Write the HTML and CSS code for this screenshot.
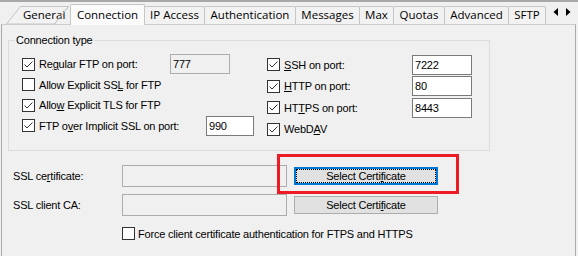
FILE: index.html
```html
<!DOCTYPE html>
<html>
<head>
<meta charset="utf-8">
<link rel="stylesheet" href="styles.css">
</head>
<body>
<div class="window">
  <div class="topline"></div>
  <div class="tabstrip">
    <div class="tab tab-general">
      <svg class="general-shape" width="66" height="18" viewBox="0 0 66 18"><polygon points="1.5,18 15.5,0.5 63.5,0.5 49.5,18" fill="#f2f2f2" stroke="#c6c6c6"/></svg>
      <span class="tab-label">General</span>
      <svg class="general-edge" width="66" height="18" viewBox="0 0 66 18"><line x1="63.5" y1="0.5" x2="49.5" y2="18" stroke="#c6c6c6"/></svg>
    </div>
    <div class="tab selected tab-connection">Connection</div>
    <div class="tab tab-ip">IP Access</div>
    <div class="tab tab-auth">Authentication</div>
    <div class="tab tab-messages">Messages</div>
    <div class="tab tab-max">Max</div>
    <div class="tab tab-quotas">Quotas</div>
    <div class="tab tab-advanced">Advanced</div>
    <div class="tab tab-sftp">SFTP</div>
    <svg class="scroll-arrows" width="18" height="9" viewBox="0 0 18 9"><polygon points="5,0 5,8 0.5,4" fill="#000"/><polygon points="13,0 13,8 17.5,4" fill="#000"/></svg>
  </div>
  <div class="panel">
    <fieldset class="group">
      <legend>Connection type</legend>
      <div class="cols">
        <div class="col col-left">
          <div class="lrow">
            <svg class="cb" width="13" height="13" viewBox="0 0 13 13"><rect x="0.5" y="0.5" width="12" height="12" fill="#fff" stroke="#333"/><path d="M2.5 6.5 L5 9 L10.5 3.5" fill="none" stroke="#333"/></svg>
            <span class="lbl lbl-regular">Re<u>g</u>ular FTP on port:</span>
            <div class="field disabled w60">777</div>
          </div>
          <div class="lrow">
            <svg class="cb" width="13" height="13" viewBox="0 0 13 13"><rect x="0.5" y="0.5" width="12" height="12" fill="#fff" stroke="#333"/></svg>
            <span class="lbl">Allow Explicit SS<u>L</u> for FTP</span>
          </div>
          <div class="lrow">
            <svg class="cb" width="13" height="13" viewBox="0 0 13 13"><rect x="0.5" y="0.5" width="12" height="12" fill="#fff" stroke="#333"/><path d="M2.5 6.5 L5 9 L10.5 3.5" fill="none" stroke="#333"/></svg>
            <span class="lbl">Allo<u>w</u> Explicit TLS for FTP</span>
          </div>
          <div class="lrow">
            <svg class="cb" width="13" height="13" viewBox="0 0 13 13"><rect x="0.5" y="0.5" width="12" height="12" fill="#fff" stroke="#333"/><path d="M2.5 6.5 L5 9 L10.5 3.5" fill="none" stroke="#333"/></svg>
            <span class="lbl lbl-implicit">FTP o<u>v</u>er Implicit SSL on port:</span>
            <div class="field w48">990</div>
          </div>
        </div>
        <div class="col col-right">
          <div class="rrow">
            <svg class="cb" width="13" height="13" viewBox="0 0 13 13"><rect x="0.5" y="0.5" width="12" height="12" fill="#fff" stroke="#333"/><path d="M2.5 6.5 L5 9 L10.5 3.5" fill="none" stroke="#333"/></svg>
            <span class="lbl lbl-right"><u>S</u>SH on port:</span>
            <div class="field w60">7222</div>
          </div>
          <div class="rrow">
            <svg class="cb" width="13" height="13" viewBox="0 0 13 13"><rect x="0.5" y="0.5" width="12" height="12" fill="#fff" stroke="#333"/><path d="M2.5 6.5 L5 9 L10.5 3.5" fill="none" stroke="#333"/></svg>
            <span class="lbl lbl-right"><u>H</u>TTP on port:</span>
            <div class="field w60">80</div>
          </div>
          <div class="rrow">
            <svg class="cb" width="13" height="13" viewBox="0 0 13 13"><rect x="0.5" y="0.5" width="12" height="12" fill="#fff" stroke="#333"/><path d="M2.5 6.5 L5 9 L10.5 3.5" fill="none" stroke="#333"/></svg>
            <span class="lbl lbl-right">HT<u>T</u>PS on port:</span>
            <div class="field w60">8443</div>
          </div>
          <div class="rrow">
            <svg class="cb" width="13" height="13" viewBox="0 0 13 13"><rect x="0.5" y="0.5" width="12" height="12" fill="#fff" stroke="#333"/><path d="M2.5 6.5 L5 9 L10.5 3.5" fill="none" stroke="#333"/></svg>
            <span class="lbl">WebD<u>A</u>V</span>
          </div>
        </div>
      </div>
    </fieldset>
    <div class="certs">
      <div class="cert-row">
        <span class="cert-label">SSL ce<u>r</u>tificate:</span>
        <div class="field disabled cert-field"></div>
        <div class="btn focused">Select Certi<u>f</u>icate</div>
      </div>
      <div class="cert-row second">
        <span class="cert-label">SSL client CA:</span>
        <div class="field disabled cert-field"></div>
        <div class="btn">Select Certi<u>f</u>icate</div>
      </div>
      <div class="force-row">
        <svg class="cb" width="13" height="13" viewBox="0 0 13 13"><rect x="0.5" y="0.5" width="12" height="12" fill="#fff" stroke="#333"/></svg>
        <span class="lbl">Force client certificate authentication for FTPS and HTTPS</span>
      </div>
    </div>
    <div class="highlight"></div>
  </div>
</div>
</body>
</html>
```
FILE: styles.css
```css
* { box-sizing: border-box; }
html, body { margin: 0; padding: 0; background: #f0f0f0; }
.window {
  width: 578px;
  height: 256px;
  overflow: hidden;
  background: #f0f0f0;
  font-family: "Liberation Sans", Arial, sans-serif;
  font-size: 11px;
  letter-spacing: -0.2px;
  color: #000;
}
u { text-decoration: underline; text-underline-offset: 1px; }
.topline { height: 2px; background: #a8a8a8; }

/* tabs */
.tabstrip {
  display: flex;
  align-items: flex-end;
  height: 22px;
  padding-left: 5px;
}
.tab {
  height: 18px;
  margin-left: -1px;
  border: 1px solid #c6c6c6;
  border-bottom: none;
  border-radius: 2px 2px 0 0;
  background: #f2f2f2;
  font-family: "Open Sans", "Noto Sans", sans-serif;
  font-size: 11.5px;
  letter-spacing: 0;
  line-height: 16px;
  text-align: center;
  white-space: nowrap;
}
.tab.selected {
  position: relative;
  z-index: 2;
  height: 21px;
  margin-bottom: -1px;
  padding-top: 2px;
  background: #fbfbfb;
}
.tab-general {
  position: relative;
  margin-left: 0;
  width: 66px;
  border: none;
  background: transparent;
  text-align: left;
  padding-left: 18px;
  padding-top: 1px;
}
.general-shape, .general-edge { position: absolute; left: 0; top: 0; }
.tab-general .tab-label { position: relative; }
.tab-connection { width: 75px; }
.tab-ip { width: 61px; }
.tab-auth { width: 92px; }
.tab-messages { width: 65px; }
.tab-max { width: 35px; }
.tab-quotas { width: 52px; }
.tab-advanced { width: 65px; }
.tab-sftp { width: 38px; }
.scroll-arrows { align-self: flex-start; margin-top: 6px; margin-left: 7px; }

/* panel */
.panel {
  position: relative;
  margin-left: 1px;
  width: 575px;
  height: 240px;
  border: 1px solid #a9a9a9;
  border-top-color: #cdcdcd;
  background: #f0f0f0;
}
.group {
  margin: 9px 0 0 6px;
  width: 482px;
  padding: 0 0 10px 0;
  border: 1px solid #dcdcdc;
  min-width: 0;
}
.group legend {
  margin-left: 6px;
  padding: 0 1px;
  line-height: 12px;
}
.cols {
  display: flex;
  padding: 8px 0 0 13px;
}
.col-left { width: 245px; }
.lrow, .rrow {
  display: flex;
  align-items: center;
  gap: 4px;
}
.lrow { height: 20.5px; }
.rrow { height: 21.5px; }
.cb { flex: none; display: block; }
.lbl { white-space: nowrap; }
.lbl-regular { width: 127px; }
.lbl-implicit { width: 163px; }
.lbl-right { width: 124px; }

.field {
  flex: none;
  height: 20px;
  border: 1px solid #7a7a7a;
  background: #fff;
  padding: 0 2px;
  line-height: 18px;
}
.field.disabled { background: #f0f0f0; border-color: #acacac; }
.w60 { width: 60px; }
.w48 { width: 48px; }

/* certificates */
.certs { padding-left: 11px; margin-top: 14px; }
.cert-row {
  display: flex;
  align-items: center;
  height: 22px;
}
.cert-row.second { margin-top: 7px; }
.cert-label { width: 109px; white-space: nowrap; }
.cert-field { width: 165px; height: 22px; }
.btn {
  position: relative;
  margin-left: 7px;
  width: 144px;
  height: 18px;
  border: 1px solid #adadad;
  background: #e1e1e1;
  text-align: center;
  line-height: 16px;
  white-space: nowrap;
}
.btn.focused { border: 2px solid #0078d7; line-height: 14px; }
.btn.focused::after {
  content: "";
  position: absolute;
  inset: 0;
  border: 1px dotted #000;
}
.force-row {
  display: flex;
  align-items: center;
  gap: 3px;
  height: 13px;
  margin-top: 11px;
  padding-left: 109px;
}
.highlight {
  position: absolute;
  left: 275px;
  top: 129px;
  width: 182px;
  height: 40px;
  border: 3px solid #ed1c24;
}
```
